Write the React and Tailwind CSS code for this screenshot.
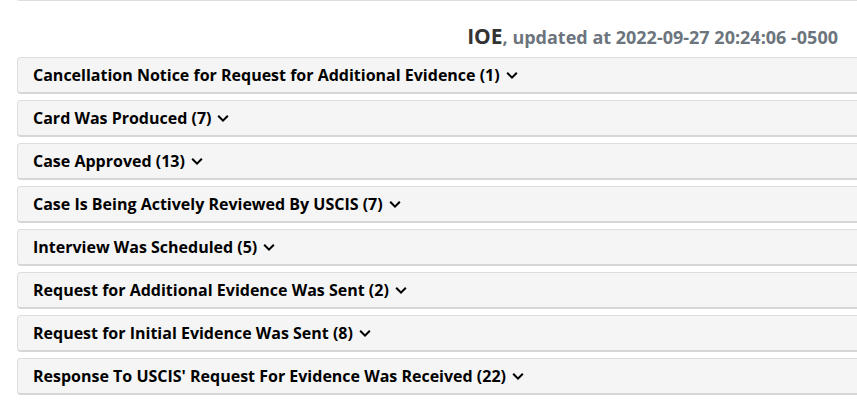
import React from "react"

const statuses = [
    ["Cancellation Notice for Request for Additional Evidence", 1],
    ["Card Was Produced", 7],
    ["Case Approved", 13],
    ["Case Is Being Actively Reviewed By USCIS", 7],
    ["Interview Was Scheduled", 5],
    ["Request for Additional Evidence Was Sent", 2],
    ["Request for Initial Evidence Was Sent", 8],
    ["Response To USCIS' Request For Evidence Was Received", 22],
]

const Chevron = () => (
    <svg width="14" height="14" viewBox="0 0 16 16" className="ml-[5px]">
        <path d="M2.5 5.5 8 11l5.5-5.5" fill="none" stroke="#000" strokeWidth="2.4" />
    </svg>
)

const App = () => {
    return (
        <div className="w-[857px] h-[403px] overflow-hidden bg-white" style={{ fontFamily: '"Open Sans", sans-serif' }}>
            <div className="ml-[17px] w-[860px] h-[5px] -mt-[4px] bg-white border border-[#ddd] border-b-2 rounded"></div>
            <div className="pr-[19px] pt-[24px] pb-[8px] text-right leading-[22px] font-bold">
                <span className="text-[21px] text-[#333]">IOE</span>
                <span className="text-[18px] text-[#6c757d]">, updated at 2022-09-27 20:24:06 -0500</span>
            </div>
            <div className="ml-[17px] w-[860px] flex flex-col gap-[6px]">
                {statuses.map(([title, count]) => (
                    <div key={title} className="h-[37px] bg-[#f5f5f5] border border-[#ddd] border-b-2 border-b-[#d6d6d6] rounded flex items-center px-[15px]">
                        <span className="text-[16px] font-bold text-black">{title} ({count})</span>
                        <Chevron />
                    </div>
                ))}
            </div>
        </div>
    )
}

export default App
